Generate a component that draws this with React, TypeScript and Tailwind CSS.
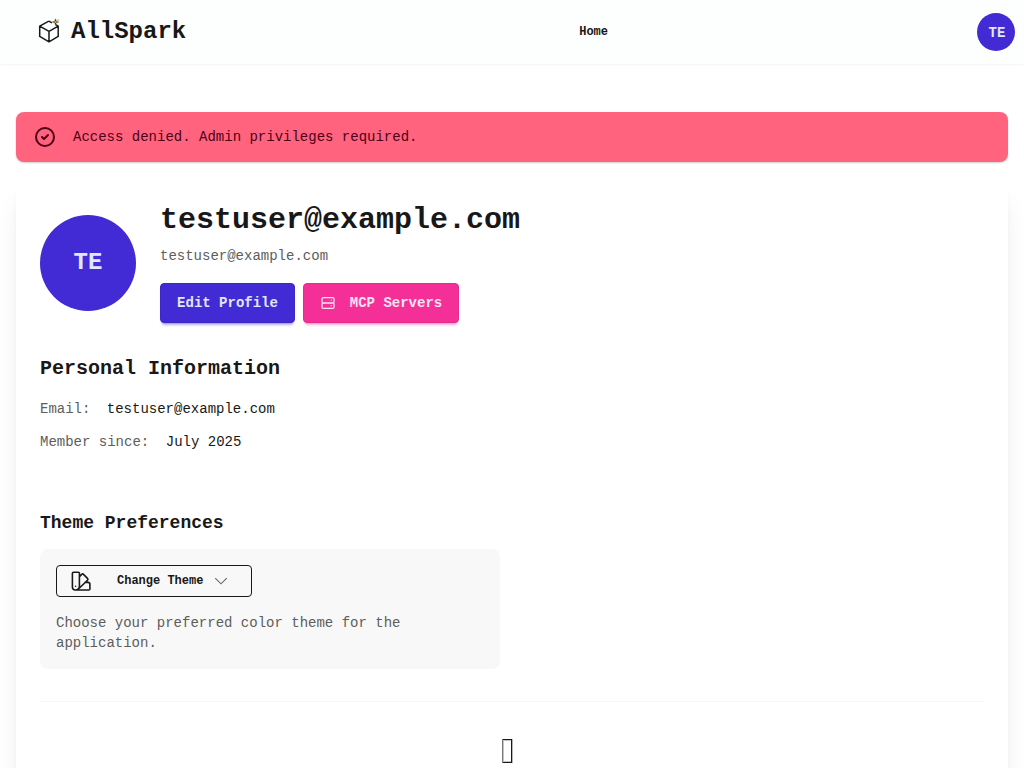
import React from "react";

function Logo() {
  return (
    <svg className="mb-1 h-7 w-6 shrink-0" viewBox="0 0 24 28" fill="none">
      <path d="M11.8 5.2 L2.7 10.2 V20.4 L12 25.8 L21.2 20.4 V10.2 L18.6 8.7 M2.7 10.2 L12 15.4 L21.2 10.2 M12 15.4 V25.8 M11.8 5.2 L15 6.8" stroke="#18181b" strokeWidth="1.5" strokeLinejoin="round" />
      <path d="M18.5 2.8 L19.3 5.2 L21.7 6 L19.3 6.8 L18.5 9.2 L17.7 6.8 L15.3 6 L17.7 5.2 Z" fill="#3a3430" stroke="#3a3430" strokeWidth="0.4" />
      <circle cx="18.5" cy="6" r="1.1" fill="#f5a623" />
      <path d="M20 4.8 L22 3.4" stroke="#f8c471" strokeWidth="1.6" />
    </svg>
  );
}

export default function App() {
  return (
    <div className="h-[768px] overflow-hidden bg-white font-['Liberation_Mono',monospace] text-[#181818]">
      <header className="flex h-16 items-center bg-[#fdfefe] pr-[9px] pl-[37px] shadow-[0_1px_2px_rgba(0,0,0,0.05)]">
        <div className="flex w-[542.2px] items-center gap-2.5">
          <Logo />
          <span className="text-2xl leading-8 font-bold">AllSpark</span>
        </div>
        <nav className="flex-1 text-xs leading-4 font-bold">Home</nav>
        <div className="flex size-[38px] items-center justify-center rounded-full bg-[#422ad5] pt-px pl-0.5 text-sm font-bold text-[#e0e7ff]">TE</div>
      </header>

      <main className="px-4 pt-12">
        <div className="mb-4 flex h-[50px] items-center gap-4 rounded-lg bg-[#ff637d] px-[17px] text-sm text-[#4d0218] shadow-[0_1px_2px_rgba(0,0,0,0.2)]">
          <svg className="size-6 shrink-0" viewBox="0 0 24 24" fill="none" stroke="currentColor" strokeWidth="2" strokeLinecap="round" strokeLinejoin="round">
            <path d="M9 12l2 2 4-4m6 2a9 9 0 11-18 0 9 9 0 0118 0z" />
          </svg>
          <span>Access denied. Admin privileges required.</span>
        </div>

        <section className="h-[700px] rounded-lg bg-white p-6 shadow-[0_20px_25px_-5px_rgba(0,0,0,0.1),0_8px_10px_-6px_rgba(0,0,0,0.1)]">
          <div className="flex items-center gap-6">
            <div className="flex size-24 items-center justify-center rounded-full bg-[#422ad5] text-2xl font-bold text-[#e0e7ff]">TE</div>
            <div>
              <h1 className="text-3xl leading-9 font-bold">testuser@example.com</h1>
              <p className="mt-2 text-sm leading-5 text-[#5d5d5d]">testuser@example.com</p>
              <div className="mt-[17px] flex gap-2 text-sm font-bold">
                <button className="h-10 w-[135px] rounded border border-[#3d27c6] bg-[#422ad5] text-[#e0e7ff] shadow-[0_3px_2px_-2px_rgba(66,42,213,0.3),0_4px_3px_-2px_rgba(66,42,213,0.3)]">Edit Profile</button>
                <button className="flex h-10 w-[156px] items-center rounded border border-[#e32d8d] bg-[#f43098] pl-4 text-[#f9e4f0] shadow-[0_3px_2px_-2px_rgba(244,48,152,0.3),0_4px_3px_-2px_rgba(244,48,152,0.3)]">
                  <svg className="mr-[13.8px] size-4" viewBox="0 0 24 24" fill="none" stroke="currentColor" strokeWidth="2" strokeLinecap="round" strokeLinejoin="round">
                    <path d="M5 12h14M5 12a2 2 0 01-2-2V6a2 2 0 012-2h14a2 2 0 012 2v4a2 2 0 01-2 2M5 12a2 2 0 00-2 2v4a2 2 0 002 2h14a2 2 0 002-2v-4a2 2 0 00-2-2m-2-4h.01M17 16h.01" />
                  </svg>
                  MCP Servers
                </button>
              </div>
            </div>
          </div>

          <h2 className="mt-8 text-xl leading-7 font-bold">Personal Information</h2>
          <dl className="mt-4 space-y-[13px] text-sm leading-5">
            <div className="flex gap-[16.4px]"><dt className="text-[#5d5d5d]">Email:</dt><dd>testuser@example.com</dd></div>
            <div className="flex gap-[16.6px]"><dt className="text-[#5d5d5d]">Member since:</dt><dd>July 2025</dd></div>
          </dl>

          <h3 className="mt-[57px] text-lg leading-7 font-bold">Theme Preferences</h3>
          <div className="mt-3 h-[120px] w-[460px] rounded-lg bg-[#f8f8f8] p-4">
            <button className="flex h-8 w-[196px] items-center rounded border border-[#181818] pl-3 text-xs font-bold">
              <svg className="size-6" viewBox="0 0 24 24" fill="none" stroke="currentColor" strokeWidth="1.6" strokeLinecap="round" strokeLinejoin="round">
                <path d="M6.4 21A3 3 0 0 1 3.4 18V4.3A1.1 1.1 0 0 1 4.5 3.2h4.8a1.1 1.1 0 0 1 1.1 1.1V17.2A3.8 3.8 0 0 1 6.6 21ZM6.6 21h13.3c.6 0 1-.4 1-1v-4.6a2 2 0 0 0-2-2h-2.8M10.5 7.6l2.2-2.2c.5-.5 1.3-.5 1.8 0l4 4c.5.5.5 1.3 0 1.8L9.4 20M6.6 17.2h.008" />
              </svg>
              <span className="ml-6">Change Theme</span>
              <svg className="ml-3 h-3 w-3" viewBox="0 0 12 12" fill="none" stroke="#68686a" strokeWidth="1.1"><path d="M0.2 3.2 L6 8.8 L11.8 3.2" /></svg>
            </button>
            <p className="mt-4 text-sm leading-5 text-[#5d5d5d]">Choose your preferred color theme for the application.</p>
          </div>

          <div className="mt-8 border-t border-[#f6f6f6] pt-[37px] pl-[462px]">
            <svg className="h-6 w-3" viewBox="0 0 12 24" fill="none" shapeRendering="crispEdges">
              <path d="M1 1.5H10M1 22.5H9M1.5 1V23M9.5 1V23" stroke="#c4c4c4" />
              <path d="M0.5 0V24" stroke="#777" />
              <path d="M1 0.5H10M1 23.5H10M9.5 0V24" stroke="#18181b" />
              <path d="M10.5 0V24" stroke="#b5b5b8" />
            </svg>
          </div>
        </section>
      </main>
    </div>
  );
}
